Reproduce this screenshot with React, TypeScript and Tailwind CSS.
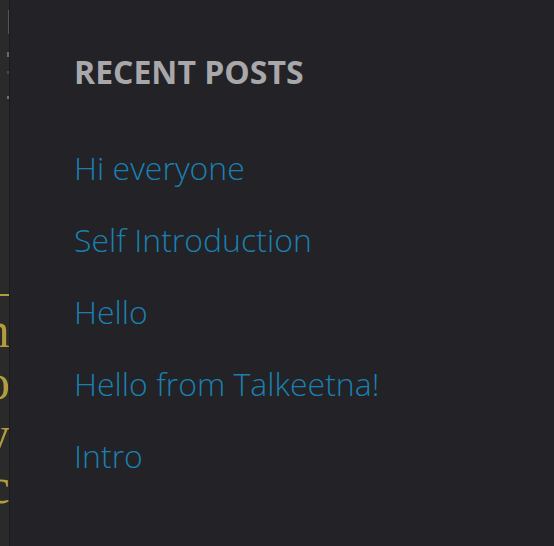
const POSTS = ['Hi everyone', 'Self Introduction', 'Hello', 'Hello from Talkeetna!', 'Intro'];

// cut-off ends of the main column's lines, only their last letters show
const EDGE_LINES = ['m', 'o', 'y', 'c'];

export default function App() {
  return (
    <div className="flex h-[546px] w-[554px] overflow-hidden bg-[#222227]">
      <div className="flex w-[9px] shrink-0 flex-col items-end overflow-hidden bg-[#2a2a2a]">
        <div className="mt-[10px] h-[24px] w-px bg-[#55565a]" />
        <div className="mt-[18px] h-[5px] w-[2px] bg-[#6a6a6a]" />
        <div className="mt-[14px] h-[3px] w-[2px] bg-[#4a4a4a]" />
        <div className="mt-[22px] h-[3px] w-[2px] bg-[#707070]" />
        <div className="mt-[195px] h-[2px] w-[9px] bg-[#b19d3e]" />
        <div className="mt-[8px] flex flex-col items-end font-['Liberation_Serif',serif] text-[50px] leading-[52px] text-[#b19d3e]">
          {EDGE_LINES.map((ch) => (
            <span key={ch} className="-mr-[1px]">{ch}</span>
          ))}
        </div>
      </div>
      <div className="w-px shrink-0 bg-[#1b1b1d]" />
      <aside className="flex-1 pl-[64px] pt-[50px] font-['Open_Sans',sans-serif]">
        <h2 className="text-[32px] font-bold leading-[44px] text-[#a8a8aa]">RECENT POSTS</h2>
        <ul className="mt-[52px] flex flex-col">
          {POSTS.map((title) => (
            <li key={title} className="h-[72px]">
              <a href="#" className="text-[32px] font-light leading-[44px] text-[#1a80b0]">
                {title}
              </a>
            </li>
          ))}
        </ul>
      </aside>
    </div>
  );
}
